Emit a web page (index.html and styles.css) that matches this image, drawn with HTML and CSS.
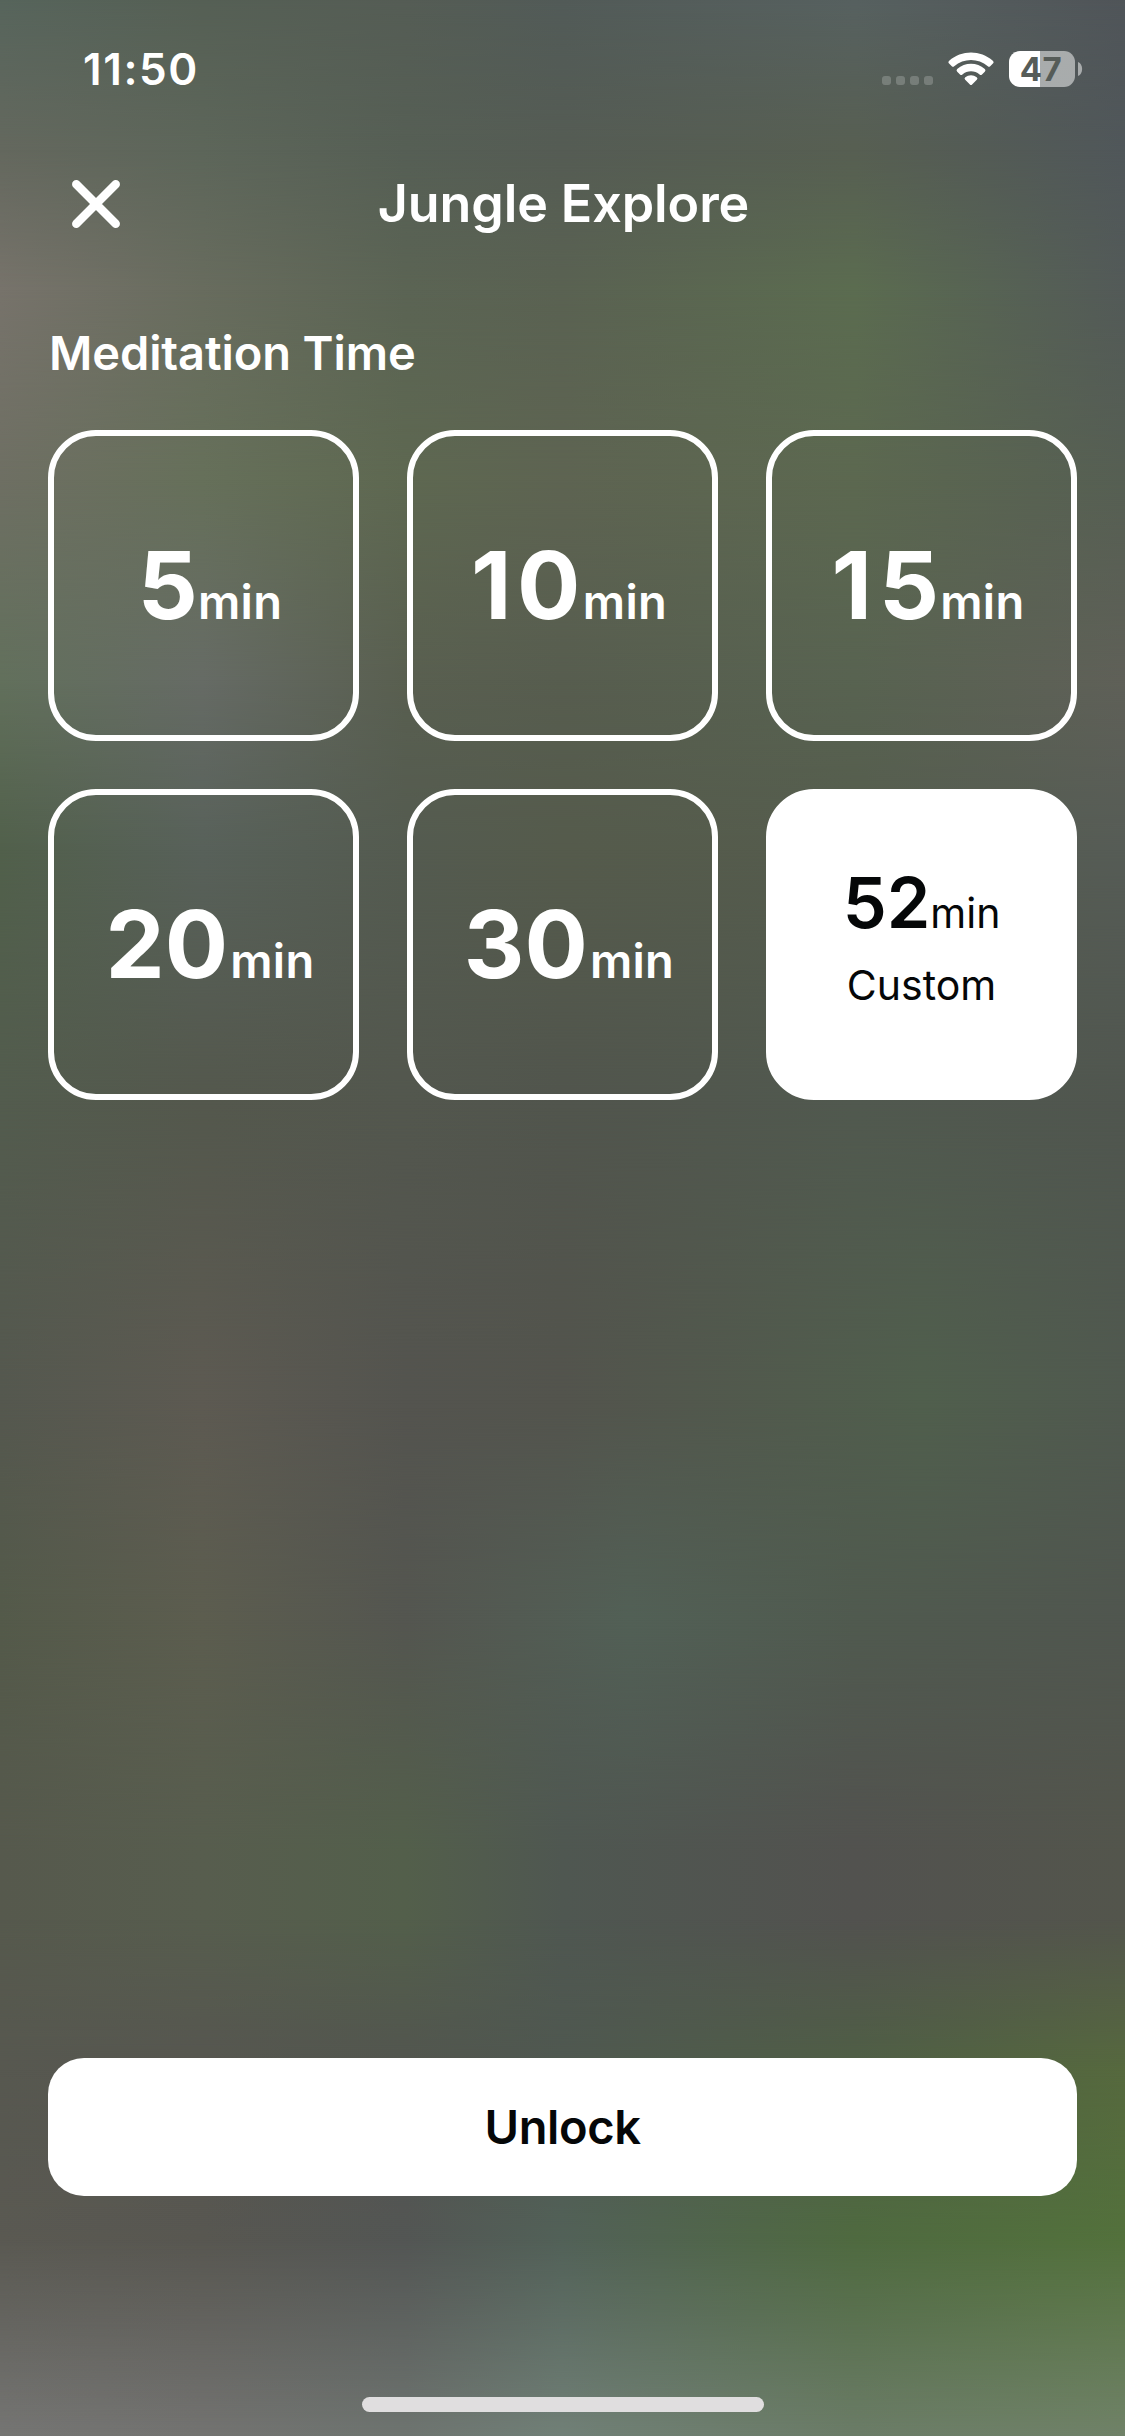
FILE: index.html
```html
<!DOCTYPE html>
<html lang="en">
<head>
<meta charset="utf-8">
<title>Jungle Explore</title>
<link rel="stylesheet" href="styles.css">
</head>
<body>
<div class="screen">
  <div class="backdrop" aria-hidden="true">
    <i class="band b0"></i><i class="band b1"></i><i class="band b2"></i><i class="band b3"></i>
    <i class="band b4"></i><i class="band b5"></i><i class="band b6"></i><i class="band b7"></i>
    <i class="band b8"></i><i class="band b9"></i><i class="band b10"></i><i class="band b11"></i>
    <i class="band b12"></i>
  </div>
  <div class="content">
    <div class="status">
      <span class="clock">11:50</span>
      <div class="signals">
        <div class="dots"><i></i><i></i><i></i><i></i></div>
        <svg class="wifi" width="46" height="34" viewBox="0 0 46 34">
          <path d="M1.1 11.6 Q-.3 10.2 1.2 8.8 C13.500-2.300 32.500-2.300 44.800 8.800 Q46.300 10.200 44.900 11.600 L42.200 14.300 Q41 15.400 39.800 14.300 C30.300 5.800 15.700 5.800 6.200 14.300 Q5 15.400 3.800 14.300Z"/>
          <path d="M9.200 19.700 Q7.800 18.400 9.200 17.100 C17 9.900 29 9.900 36.800 17.100 Q38.200 18.400 36.800 19.700 L34 22.400 Q32.800 23.500 31.600 22.400 C26.700 18.100 19.300 18.100 14.400 22.400 Q13.200 23.500 12 22.400Z"/>
          <path d="M17.200 27.700 Q15.800 26.400 17.300 25.300 C20.600 22.500 25.400 22.500 28.700 25.300 Q30.200 26.400 28.800 27.700 L24.100 32.400 Q23 33.500 21.900 32.400Z"/>
        </svg>
        <div class="battery"><span class="cell">47</span><svg width="5" height="14" viewBox="0 0 5 14"><path d="M0 0C5.500 2 5.500 12 0 14Z"/></svg></div>
      </div>
    </div>
    <header class="header">
      <button class="close" aria-label="Close"><svg width="48" height="48" viewBox="0 0 48 48"><path d="M4.300 4.300 43.700 43.700M43.700 4.300 4.300 43.700"/></svg></button>
      <h1>Jungle Explore</h1>
    </header>
    <h2>Meditation Time</h2>
    <div class="times">
      <button class="time"><b>5</b><span>min</span></button>
      <button class="time ten"><b>10</b><span>min</span></button>
      <button class="time fifteen"><b>15</b><span>min</span></button>
      <button class="time tens"><b>20</b><span>min</span></button>
      <button class="time tens"><b>30</b><span>min</span></button>
      <button class="time custom"><div class="value"><b>52</b><span>min</span></div><div class="label">Custom</div></button>
    </div>
    <button class="unlock">Unlock</button>
    <div class="home"></div>
  </div>
</div>
</body>
</html>
```
FILE: styles.css
```css
* { box-sizing: border-box; }
body { margin: 0; font-family: Inter, "Liberation Sans", sans-serif; color: #fff; }
button { font: inherit; color: inherit; background: none; border: 0; padding: 0; margin: 0; }

.screen { display: grid; width: 1125px; height: 2436px; overflow: hidden; }
.backdrop, .content { grid-area: 1 / 1; min-width: 0; }

/* Each band fades in over the previous one between --from and --to. */
.backdrop { display: grid; height: 2436px; isolation: isolate; z-index: 0; }
.band {
  grid-area: 1 / 1;
  background: linear-gradient(90deg, var(--a) 0%, var(--b) 18%, var(--c) 36%, var(--d) var(--dx, 50%), var(--e) var(--ex, 76%), var(--f) 100%);
  -webkit-mask-image: linear-gradient(180deg, transparent var(--from), #000 var(--to));
  mask-image: linear-gradient(180deg, transparent var(--from), #000 var(--to));
}
.b0 { --a:#57655c; --b:#566055; --c:#555d55; --d:#525b58; --e:#576160; --f:#505559; -webkit-mask-image: none; mask-image: none; }
.b1 { --from:0px; --to:150px; --a:#64685e; --b:#5d665a; --c:#565f55; --d:#555c54; --e:#575f52; --f:#50575a; }
.b2 { --from:150px; --to:290px; --a:#77736b; --b:#686c5e; --c:#5b6454; --d:#5a6252; --e:#5b6c50; --f:#535a58; }
.b3 { --from:290px; --to:480px; --a:#6e6f63; --b:#66705a; --c:#5e6851; --d:#5e6452; --e:#5c6850; --f:#565f53; }
.b4 { --from:480px; --to:680px; --a:#62705c; --b:#666b65; --c:#595f50; --d:#575d4f; --e:#586351; --f:#5f6058; }
.b5 { --from:680px; --to:850px; --a:#51604b; --b:#58615a; --c:#545b50; --d:#555b4c; --e:#555c4d; --f:#565c56; }
.b6 { --from:850px; --to:1100px; --a:#535c4e; --b:#54584d; --c:#53574e; --d:#51554d; --e:#51594f; --f:#50564f; }
.b7 { --from:1100px; --to:1400px; --a:#55584f; --b:#5d5a52; --c:#54544f; --d:#53544d; --e:#505f4d; --f:#50594f; --ex:82%; }
.b8 { --from:1400px; --to:1620px; --a:#545a4a; --b:#5c5d4f; --c:#545650; --d:#526056; --e:#505a4f; --f:#50564f; --dx:56%; }
.b9 { --from:1620px; --to:1850px; --a:#56594d; --b:#575d4e; --c:#535f4b; --d:#4f5751; --e:#52524f; --f:#53554c; }
.b10 { --from:1920px; --to:2070px; --a:#575850; --b:#565650; --c:#52554f; --d:#4f5850; --e:#4f5f45; --f:#56693e; }
.b11 { --from:2070px; --to:2240px; --a:#5a5952; --b:#585751; --c:#535654; --d:#526158; --e:#4f6a40; --f:#53713c; }
.b12 { --from:2240px; --to:2436px; --a:#757573; --b:#737371; --c:#6e7470; --d:#718077; --e:#6b7c67; --f:#708268; }

.content { display: flex; flex-direction: column; z-index: 1; }

.status { display: flex; justify-content: space-between; align-items: center; height: 138px; padding: 0 42px 0 83px; }
.clock { font-size: 44px; font-weight: 600; letter-spacing: 1.600px; line-height: 60px; }
.signals { display: flex; align-items: center; }
.dots { display: flex; gap: 4.700px; margin: 23px 15px 0 0; }
.dots i { width: 9.300px; height: 9.300px; border-radius: 3px; background: rgba(255,255,255,.2); }
.wifi { fill: #fff; margin-right: 15px; }
.battery { display: flex; align-items: center; gap: 3px; }
.battery svg { fill: rgba(255,255,255,.5); }
.cell {
  width: 66px; height: 36px; border-radius: 11px; text-align: center;
  font-size: 33px; line-height: 36px; font-weight: 700; letter-spacing: .5px; color: #565c58; text-indent: -2px;
  background: linear-gradient(90deg, #fff 31px, rgba(255,255,255,.5) 31px);
}

.header { display: grid; grid-template-columns: 96px 1fr 96px; align-items: center; height: 132px; padding: 0 48px; }
.close { display: flex; justify-content: center; }
.close svg { fill: none; stroke: #fff; stroke-width: 8.500px; stroke-linecap: round; }
h1 { margin: 0; padding-left: 2px; text-align: center; font-size: 52px; line-height: 70px; font-weight: 600; letter-spacing: -.1px; }
h2 { margin: 48px 0 0 49px; font-size: 47px; line-height: 70px; font-weight: 600; letter-spacing: -.1px; }

.times { display: grid; grid-template-columns: repeat(3, 311px); grid-auto-rows: 311px; gap: 48px; margin: 42px 48px 0; }
.time {
  display: flex; justify-content: center; align-items: baseline;
  border: 6px solid #fff; border-radius: 48px; padding: 0 0 0 13px; line-height: 299px;
}
.time b { font-size: 94px; font-weight: 700; }
.time span { font-size: 47px; font-weight: 600; letter-spacing: .3px; }
.ten b { letter-spacing: 5.500px; margin-right: -3px; }
.fifteen b { letter-spacing: 7px; margin-right: -6px; }
.tens b { margin-right: 2px; }
.time.custom {
  flex-direction: column; justify-content: flex-start; align-items: center;
  background: #fff; color: #050708; padding: 63px 0 0; line-height: 90px;
}
.value { display: flex; justify-content: center; align-items: baseline; height: 90px; }
.time.custom b { font-size: 70px; font-weight: 600; }
.time.custom span, .label { font-size: 41px; font-weight: 400; letter-spacing: 0; }
.label { line-height: 75px; }

.unlock {
  height: 138px; margin: 958px 48px 0; border-radius: 36px; background: #fff; color: #050708;
  font-size: 47px; font-weight: 600; letter-spacing: -.4px; line-height: 138px; flex-shrink: 0;
}
.home { width: 402px; height: 15px; margin: 201px auto 0; border-radius: 8px; background: #e0dedf; flex-shrink: 0; }
```
